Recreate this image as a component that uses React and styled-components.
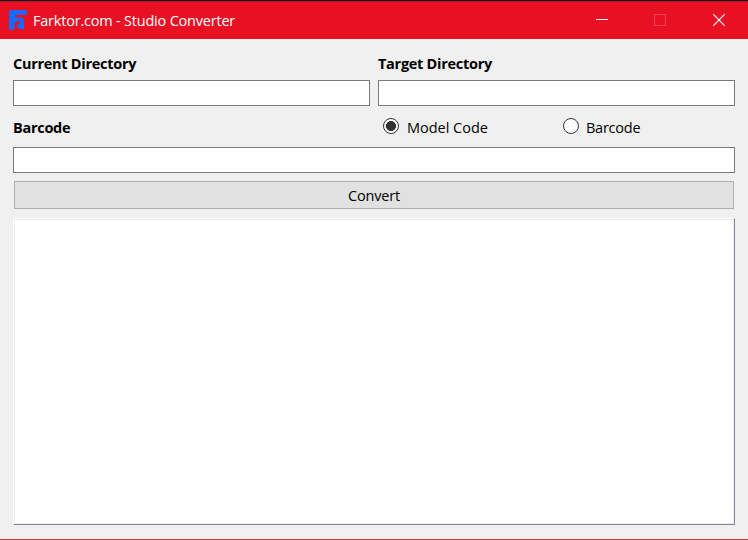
import React, { useState } from "react";
import styled, { createGlobalStyle } from "styled-components";

const GlobalStyle = createGlobalStyle`
  * { box-sizing: border-box; }
  body {
    margin: 0;
    overflow: hidden;
    font-family: "Open Sans", "Noto Sans", sans-serif;
    font-size: 14.5px;
    color: #000;
  }
`;

const Window = styled.div`
  display: flex;
  flex-direction: column;
  width: 748px;
  height: 540px;
  background: #f0f0f0;
  border-bottom: 1px solid #d13438;
`;

const TitleBar = styled.header`
  display: flex;
  align-items: center;
  height: 39px;
  flex: none;
  padding-left: 9px;
  border-top: 1px solid #1a1114;
  background: #e81123;
  box-shadow: inset 0 1px #b51e28;
  color: #fff;
`;

const Title = styled.h1`
  flex: 1;
  margin: 0 0 0 4px;
  padding-top: 2px;
  font-size: 14.5px;
  font-weight: 400;
  line-height: 20px;
  white-space: nowrap;
  letter-spacing: -0.21px;
`;

const WindowButton = styled.button`
  display: grid;
  place-items: center;
  width: 58px;
  height: 37px;
  padding: 0;
  border: 0;
  background: none;
  color: #fff;
  opacity: ${({ disabled }) => (disabled ? 0.22 : 1)};
  &:last-child {
    margin-left: 1px;
  }
`;

const Content = styled.main`
  display: flex;
  flex-direction: column;
  flex: 1;
  padding: 15px 13px 14px;
`;

const Columns = styled.div`
  display: grid;
  grid-template-columns: 357px 357px;
  column-gap: 8px;
`;

const Label = styled.label`
  display: block;
  height: ${({ $height }) => $height}px;
  font-weight: 700;
  font-size: 14.5px;
  line-height: 20px;
  letter-spacing: -0.28px;
`;

const TextField = styled.input`
  display: block;
  width: 100%;
  height: 26px;
  padding: 2px 5px;
  border: 1px solid #7a7a7a;
  border-radius: 0;
  outline: none;
  background: #fff;
  font: inherit;
`;

const ModeRow = styled(Columns)`
  padding-top: 12px;
`;

const Options = styled.div`
  display: grid;
  grid-template-columns: 180px 1fr;
  padding-left: 5px;
`;

const Option = styled.label`
  display: flex;
  align-items: flex-start;
  gap: ${({ $gap }) => $gap}px;
  height: 29px;
  line-height: 20px;
  letter-spacing: ${({ $tracking }) => $tracking}px;
`;

const Radio = styled.input`
  appearance: none;
  width: 16px;
  height: 16px;
  margin: 0;
  border: 1px solid #333;
  border-radius: 50%;
  outline: none;
  background: #fff;
  &:checked {
    background: radial-gradient(circle, #333 0 4.7px, #fff 5.3px);
  }
`;

const ConvertButton = styled.button`
  flex: none;
  height: 28px;
  margin: 8px 1px 9px;
  padding: 1px 0 0;
  border: 1px solid #adadad;
  background: #e1e1e1;
  color: #000;
  font: inherit;
  line-height: 20px;
  letter-spacing: -0.2px;
`;

const Output = styled.textarea`
  flex: 1;
  display: block;
  width: 100%;
  padding: 4px;
  resize: none;
  outline: none;
  border: 1px solid;
  border-color: #fff #828790 #828790 #fff;
  border-radius: 0;
  background: #fff;
  box-shadow: inset 0 0 0 1px #ececef;
  font: inherit;
`;

function Logo() {
  return (
    <svg width="20" height="22" viewBox="0 0 20 22" fill="#1769ff">
      <path d="M2.500 1H16Q18 1 18 3V6Q17.500 5.800 16 5.800H8.500Q6.500 5.800 6.500 8V8.500H11.500Q15 8.500 15 12V20H11.500Q8.300 20 8.300 17.200Q8.300 14.200 11 14.200V12.200H9Q5.700 12.200 5.700 15.500V18.500Q5.700 20.700 3.500 20.700H0V3.500Q0 1 2.500 1Z" />
    </svg>
  );
}

function MinimizeIcon() {
  return (
    <svg width="12" height="12" shapeRendering="crispEdges">
      <rect y="5" width="12" height="1" fill="currentColor" />
    </svg>
  );
}

function MaximizeIcon() {
  return (
    <svg width="12" height="12" fill="none" stroke="currentColor">
      <rect x=".5" y=".5" width="11" height="11" />
    </svg>
  );
}

function CloseIcon() {
  return (
    <svg width="12" height="12" fill="none" stroke="currentColor" strokeWidth="1.2">
      <path d="M.3 .3 11.700 11.700M11.700 .3 .3 11.700" />
    </svg>
  );
}

export default function App() {
  const [mode, setMode] = useState("model");
  return (
    <>
      <GlobalStyle />
      <Window>
        <TitleBar>
          <Logo />
          <Title>Farktor.com - Studio Converter</Title>
          <WindowButton aria-label="Minimize"><MinimizeIcon /></WindowButton>
          <WindowButton aria-label="Maximize" disabled><MaximizeIcon /></WindowButton>
          <WindowButton aria-label="Close"><CloseIcon /></WindowButton>
        </TitleBar>
        <Content>
          <Columns>
            <div>
              <Label htmlFor="current" $height={26}>Current Directory</Label>
              <TextField id="current" />
            </div>
            <div>
              <Label htmlFor="target" $height={26}>Target Directory</Label>
              <TextField id="target" />
            </div>
          </Columns>
          <ModeRow>
            <Label htmlFor="barcode" $height={29}>Barcode</Label>
            <Options>
              <Option $tracking={-0.02} $gap={8}>
                <Radio type="radio" name="mode" checked={mode === "model"} onChange={() => setMode("model")} />
                Model Code
              </Option>
              <Option $tracking={-0.25} $gap={7}>
                <Radio type="radio" name="mode" checked={mode === "barcode"} onChange={() => setMode("barcode")} />
                Barcode
              </Option>
            </Options>
          </ModeRow>
          <TextField id="barcode" />
          <ConvertButton>Convert</ConvertButton>
          <Output aria-label="Output" />
        </Content>
      </Window>
    </>
  );
}
